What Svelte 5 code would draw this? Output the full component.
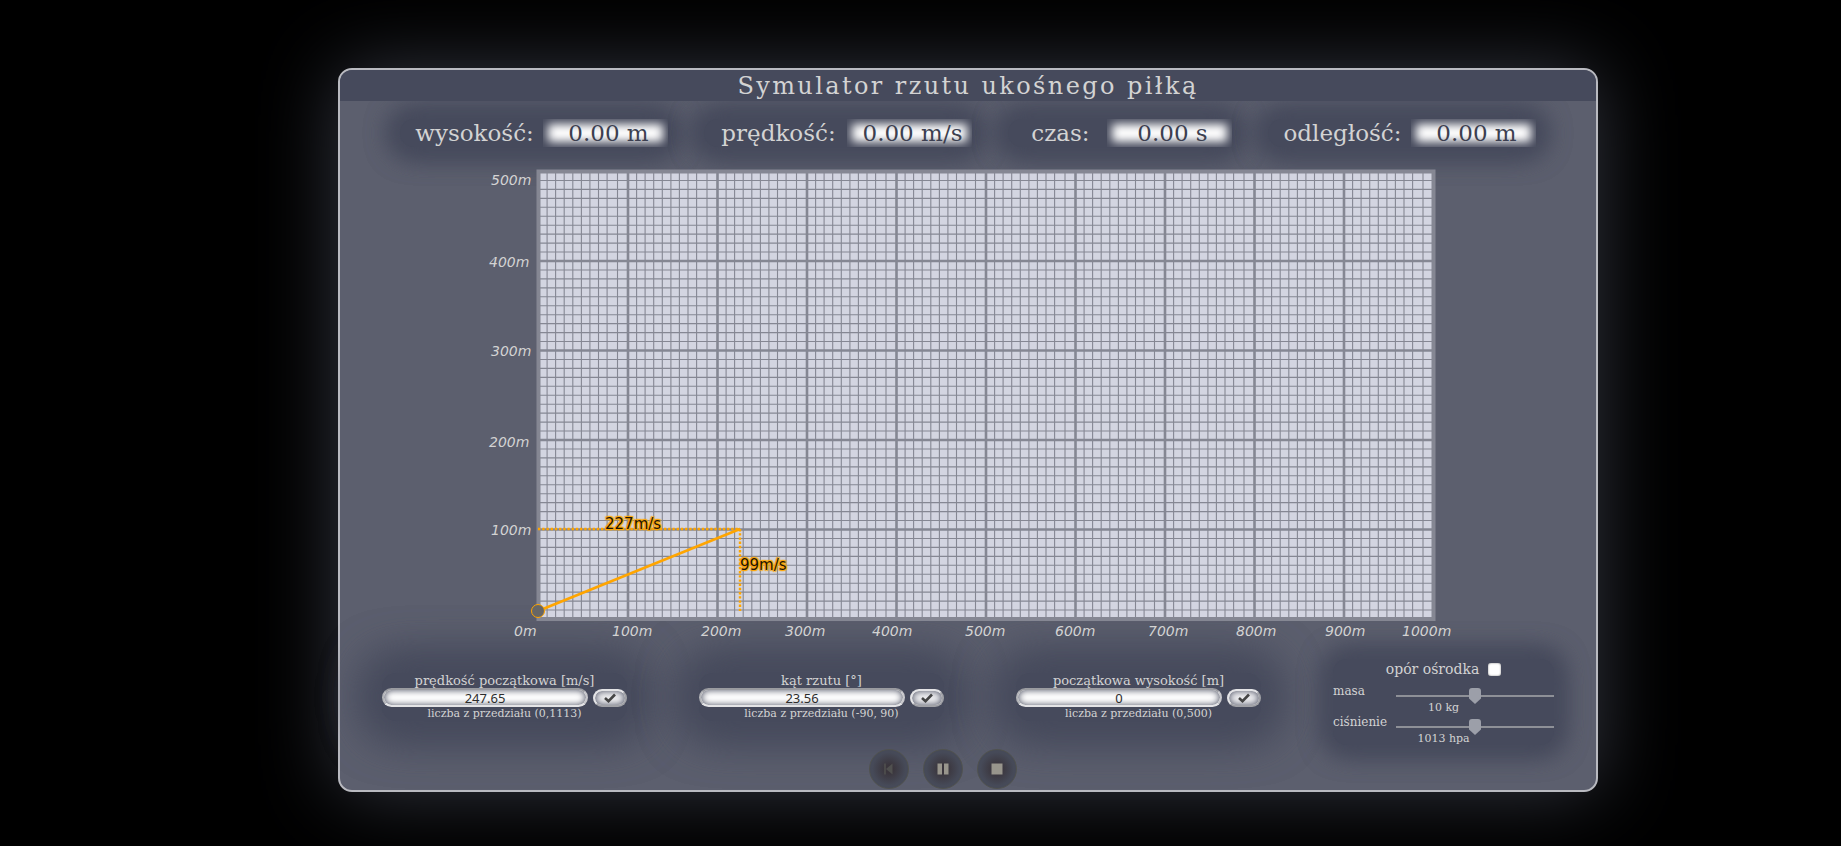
<script>
  const stats = [
    { label: 'wysokość:', value: '0.00 m' },
    { label: 'prędkość:', value: '0.00 m/s' },
    { label: 'czas:', value: '0.00 s', short: true },
    { label: 'odległość:', value: '0.00 m' }
  ];

  let fields = $state([
    { id: 'speed', label: 'prędkość początkowa [m/s]', value: '247.65', hint: 'liczba z przedziału (0,1113)' },
    { id: 'angle', label: 'kąt rzutu [°]', value: '23.56', hint: 'liczba z przedziału (-90, 90)' },
    { id: 'height', label: 'początkowa wysokość [m]', value: '0', hint: 'liczba z przedziału (0,500)' }
  ]);

  let drag = $state(false);
  let mass = $state(10);
  let pressure = $state(1013);

  // Plot area inside the chart's own coordinate system
  const left = 60.5;
  const top = 4.5;
  const stepX = 89.5;
  const stepY = 89.5;
  const width = stepX * 10;
  const height = stepY * 5;

  // Each 100 m column holds eight narrow cells and two wider ones
  const inner = [8.6, 17.1, 25.7, 34.3, 42.9, 51.4, 60, 68.6, 79];
  const minorX = Array.from({ length: 10 }, (_, i) => inner.map((d) => left + i * stepX + d)).flat();
  const minorY = Array.from({ length: 50 }, (_, i) => i)
    .filter((i) => i % 10)
    .map((i) => top + (i * stepY) / 10);
  const majorX = Array.from({ length: 9 }, (_, i) => left + (i + 1) * stepX);
  const majorY = Array.from({ length: 4 }, (_, i) => top + (i + 1) * stepY);

  const labelsY = [
    ['500m', 13, 18], ['400m', 11, 100], ['300m', 13, 189], ['200m', 11, 280], ['100m', 13, 368]
  ];
  const labelsX = [
    ['0m', 36], ['100m', 134], ['200m', 223], ['300m', 307], ['400m', 394], ['500m', 487],
    ['600m', 577], ['700m', 670], ['800m', 758], ['900m', 847], ['1000m', 924]
  ];
</script>

<div class="page">
<main class="panel">
  <h1>Symulator rzutu ukośnego piłką</h1>

  <section class="stats">
    {#each stats as s}
      <div class="stat">
        <span class="stat-label" class:short={s.short}>{s.label}</span>
        <output class="stat-value">{s.value}</output>
      </div>
    {/each}
  </section>

  <svg class="chart" viewBox="0 0 980 474">
    <rect x={left} y={top} {width} {height} fill="#d3d5e1" />
    <g stroke="#858793" stroke-width="1.1">
      {#each minorX as x}<line x1={x} x2={x} y1={top} y2={top + height} />{/each}
      {#each minorY as y}<line x1={left} x2={left + width} y1={y} y2={y} />{/each}
    </g>
    <g stroke="#858793" stroke-width="2.6">
      {#each majorX as x}<line x1={x} x2={x} y1={top} y2={top + height} />{/each}
      {#each majorY as y}<line x1={left} x2={left + width} y1={y} y2={y} />{/each}
    </g>
    <rect x={left} y={top} {width} {height} fill="none" stroke="#858793" stroke-width="4" />
    <g class="axis">
      {#each labelsY as [t, x, y]}<text {x} {y}>{t}</text>{/each}
      {#each labelsX as [t, x]}<text {x} y="469">{t}</text>{/each}
    </g>
    <g stroke="orange" fill="none">
      <path d="M60 362H262" stroke-width="2.4" stroke-dasharray="2.4 1.8" />
      <path d="M262 362V444" stroke-width="2.4" stroke-dasharray="2.4 1.8" />
      <path d="M60 444L262 362" stroke-width="2.6" />
      <circle cx="60" cy="444" r="6.5" fill="#666" stroke-width="1" />
    </g>
    <g class="vector">
      <text x="127" y="362">227m/s</text>
      <text x="262" y="403">99m/s</text>
    </g>
  </svg>

  <section class="controls">
    {#each fields as f}
      <form class="field" onsubmit={(e) => e.preventDefault()}>
        <label for={f.id}>{f.label}</label>
        <div class="entry">
          <input type="text" id={f.id} bind:value={f.value} />
          <button class="ok" aria-label="OK">
            <svg viewBox="0 0 12 10"><path d="M1 5L4.5 8.2L11 1.5" fill="none" stroke="#444" stroke-width="2.6" /></svg>
          </button>
        </div>
        <small>{f.hint}</small>
      </form>
    {/each}

    <div class="medium">
      <label class="toggle">opór ośrodka <input type="checkbox" bind:checked={drag} /></label>
      <div class="slider">
        <label for="mass">masa</label>
        <input type="range" id="mass" min="0" max="20" bind:value={mass} />
        <output>{mass} kg</output>
      </div>
      <div class="slider">
        <label for="pressure">ciśnienie</label>
        <input type="range" id="pressure" min="0" max="2026" bind:value={pressure} />
        <output>{pressure} hpa</output>
      </div>
    </div>
  </section>

  <nav class="player">
    <button aria-label="Od początku">
      <svg viewBox="0 0 12 12"><path d="M2 0.5V11.5" stroke="#50504f" stroke-width="1.6" /><path d="M9.5 0.5V11.5L3 6Z" fill="#50504f" /></svg>
    </button>
    <button aria-label="Pauza">
      <svg viewBox="0 0 12 12"><path d="M0.5 0.5H5V11.5H0.5ZM7 0.5H11.5V11.5H7Z" fill="#98958c" /></svg>
    </button>
    <button aria-label="Stop">
      <svg viewBox="0 0 12 12"><path d="M0.5 0.5H11.5V11.5H0.5Z" fill="#98958c" /></svg>
    </button>
  </nav>
</main>
</div>

<style>
  :global(body) {
    background: #000;
  }

  .page {
    box-sizing: border-box;
    min-height: 100vh;
    padding: 68px 243px 40px 338px;
    background: #000;
  }

  .panel {
    border: 2px solid #b9bac0;
    border-radius: 14px;
    background: #5c5f6e;
    box-shadow: 0 0 80px #343741;
    color: lightgray;
    font-family: "DejaVu Serif", serif;
  }

  h1 {
    position: relative;
    z-index: 1;
    margin: 0;
    padding-top: 2px;
    border-radius: 12px 12px 0 0;
    background: #464a5c;
    font-size: 24px;
    font-weight: 400;
    line-height: 29px;
    letter-spacing: 0.1em;
    text-align: center;
  }

  .stats {
    display: flex;
    justify-content: center;
    gap: 36px;
    padding: 18px 0 20px;
  }

  .stat {
    display: flex;
    border-radius: 14px;
    background: #464a5c;
    box-shadow: 0 0 24px 10px #464a5c, 0 0 24px 10px #464a5c;
    font-size: 23px;
    line-height: 28px;
  }

  .stat-label {
    width: 143px;
    box-sizing: border-box;
    padding-left: 6px;
    text-align: center;
  }

  .stat-label.short {
    width: 99px;
  }

  .stat-value {
    width: 125px;
    box-sizing: border-box;
    padding-left: 6px;
    background: #fff;
    box-shadow: inset 0 0 10px 5px #464a5c;
    color: #3c3f50;
    text-align: center;
  }

  .chart {
    display: block;
    position: relative;
    width: 100%;
    max-width: 980px;
    margin: 0 auto;
  }

  .axis {
    fill: lightgray;
    font: italic 14px "DejaVu Sans", sans-serif;
  }

  .vector {
    fill: #1c1508;
    font: 15px "DejaVu Sans", sans-serif;
    text-shadow: 1px 1px 1px orange, -1px -1px 1px orange, 1px -1px 1px orange, -1px 1px 1px orange, 0 0 2px orange;
  }

  .controls {
    display: flex;
    justify-content: center;
    align-items: flex-start;
    gap: 72px;
    padding-top: 18px;
  }

  .field {
    display: flex;
    flex-direction: column;
    align-items: center;
    width: 245px;
    margin-top: 14px;
    border-radius: 14px;
    background: #464a5c;
    box-shadow: 0 0 44px 16px #464a5c, 0 0 44px 16px #464a5c;
    font-size: 13px;
    line-height: 15px;
  }

  .entry {
    display: flex;
    align-items: flex-end;
    gap: 5px;
  }

  .entry input {
    box-sizing: border-box;
    width: 206px;
    height: 19px;
    padding: 0 30px;
    border: 2px solid;
    border-color: #9a9ba0 #c8c8cc #e4e4e6 #b4b5b9;
    border-radius: 10px;
    background: #fff;
    box-shadow: inset 0 0 7px #464a5c;
    color: #2c2c2c;
    font: 13px "Noto Sans", sans-serif;
    text-align: center;
  }

  .ok {
    display: grid;
    place-items: center;
    box-sizing: border-box;
    width: 34px;
    height: 18px;
    padding: 0;
    border: 2px solid;
    border-color: #e4e4e6 #a0a1a6 #a0a1a6 #e4e4e6;
    border-radius: 9px;
    background: #efeff1;
    box-shadow: inset 0 0 7px #464a5c;
  }

  .ok svg {
    width: 12px;
    height: 10px;
  }

  small {
    font-size: 11px;
    line-height: 14px;
  }

  .medium {
    width: 221px;
    height: 86px;
    border-radius: 14px;
    background: #464a5c;
    box-shadow: 0 0 24px 9px #464a5c, 0 0 24px 9px #464a5c;
    font-size: 12px;
  }

  .toggle {
    display: flex;
    justify-content: center;
    align-items: center;
    gap: 9px;
    font-size: 14px;
    line-height: 20px;
  }

  .toggle input {
    appearance: none;
    width: 13px;
    height: 13px;
    margin: 0;
    border-radius: 3px;
    background: #fff;
    box-shadow: inset 0 0 2px #777;
  }

  .slider {
    display: grid;
    grid-template-columns: auto 158px;
    justify-content: space-between;
    align-items: start;
    height: 31px;
    line-height: 15px;
  }

  .slider label {
    padding-top: 5px;
  }

  .slider input {
    appearance: none;
    width: 158px;
    height: 16px;
    margin: 9px 0 0;
    background: linear-gradient(#8e9097, #8e9097) center / 100% 2px no-repeat;
  }

  .slider input::-webkit-slider-thumb {
    appearance: none;
    width: 12px;
    height: 16px;
    background: #9c9fa9;
    border-radius: 3px;
    clip-path: polygon(0 0, 100% 0, 100% 65%, 50% 100%, 0 65%);
  }

  .slider output {
    grid-column: 1 / -1;
    width: 100%;
    font-size: 11px;
    line-height: 8px;
    text-align: center;
  }

  .player {
    display: flex;
    justify-content: center;
    gap: 14px;
    padding: 4px 50px 1px 0;
  }

  .player button {
    position: relative;
    display: grid;
    place-items: center;
    width: 40px;
    height: 40px;
    padding: 0;
    border: 1px solid #50524f;
    border-radius: 50%;
    background: radial-gradient(circle, #3a353c 15%, #464a58 62%);
  }

  .player svg {
    width: 12px;
    height: 12px;
  }
</style>
